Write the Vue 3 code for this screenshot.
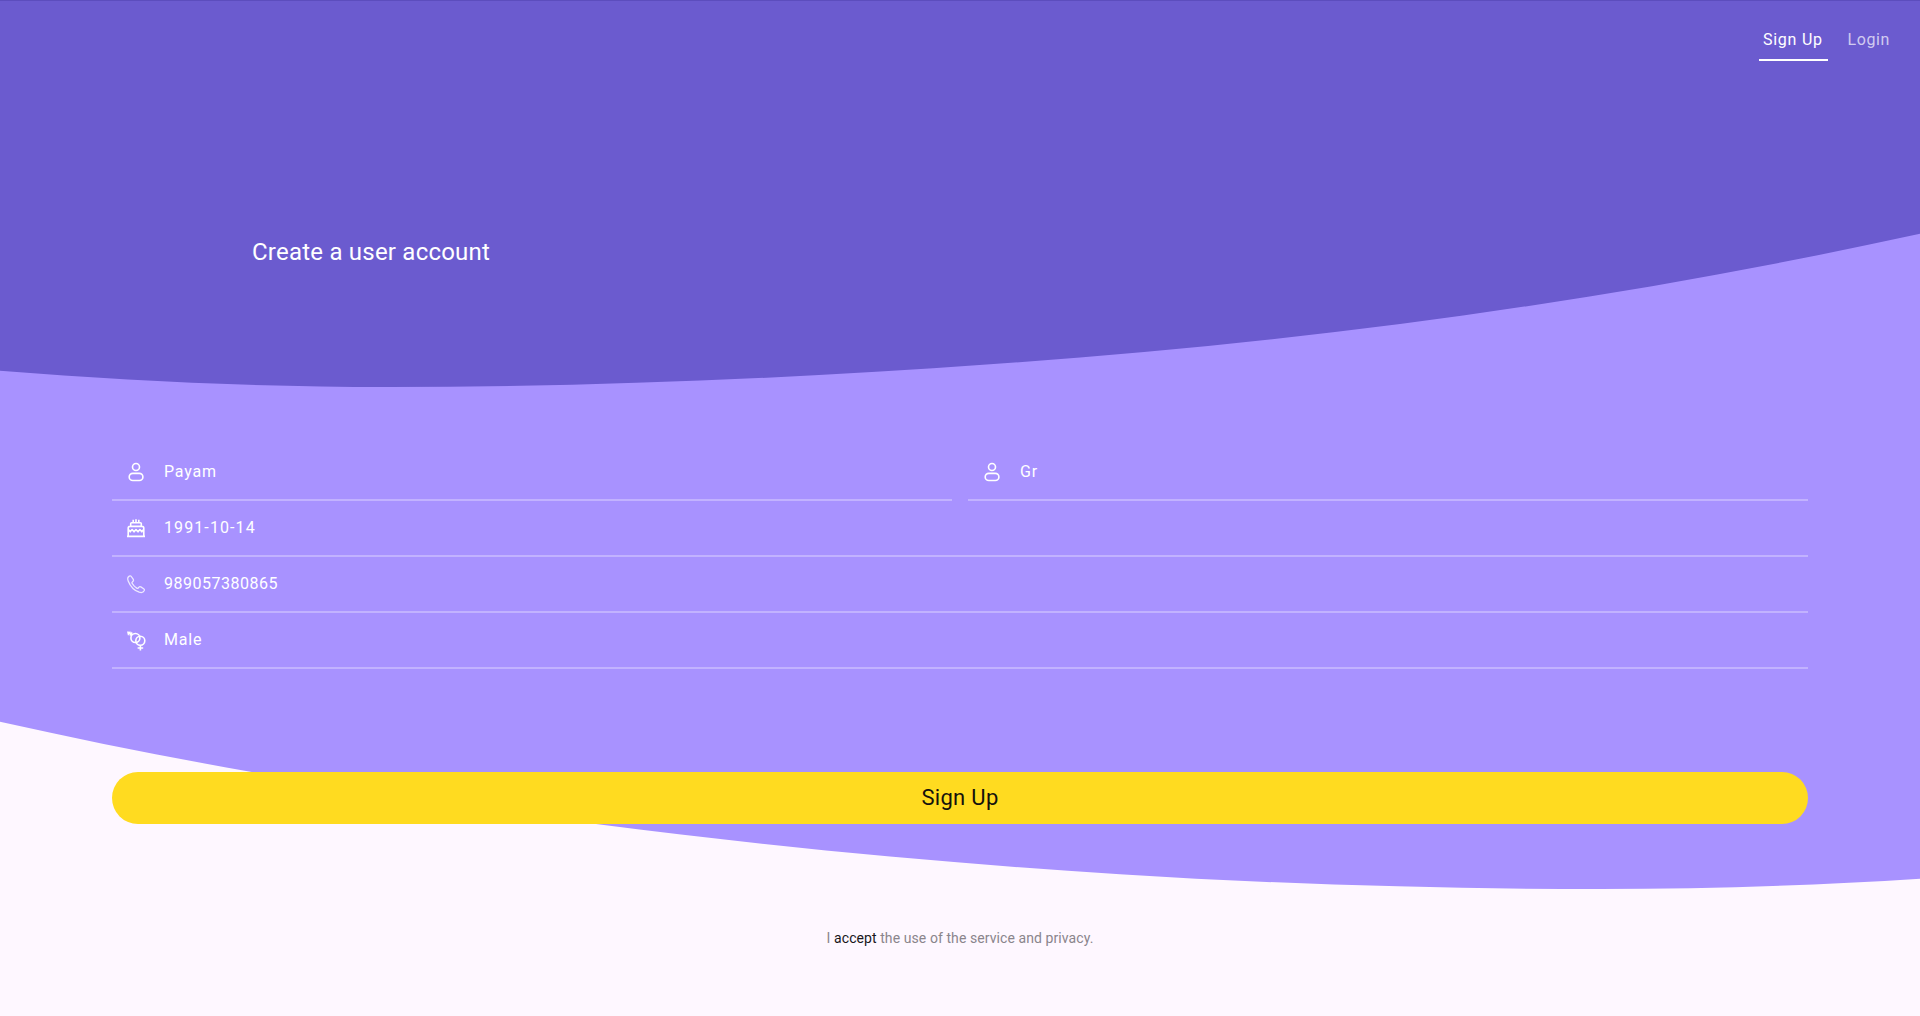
<script setup>
import { ref } from 'vue'

const tab = ref('Sign Up')
const tabs = ['Sign Up', 'Login']
const rows = [
  [
    { icon: 'person', value: 'Payam' },
    { icon: 'person', value: 'Gr' },
  ],
  [{ icon: 'cake', value: '1991-10-14' }],
  [{ icon: 'phone', value: '989057380865' }],
  [{ icon: 'gender', value: 'Male' }],
]
</script>

<template>
  <main class="page">
    <svg class="waves" viewBox="0 0 1920 1016" preserveAspectRatio="none" aria-hidden="true">
      <path
        fill="#a892ff"
        d="M0 0V721.7C199.3 766.5 398.7 798.6 598 824.2C772 846.8 946 863.2 1120 874.2C1280 884.3 1440 889 1600 889C1706.7 889 1813.3 885.6 1920 878.8V0Z"
      />
      <path
        fill="#6b5bcf"
        d="M0 0V370.8C129.3 381.3 258.7 387 388 387C588.7 387 789.3 378.7 990 364.3C1126.7 354.5 1263.3 341.7 1400 324C1573.3 301.5 1746.7 271.8 1920 233.8V0Z"
      />
    </svg>

    <header class="top">
      <nav class="tabs">
        <button
          v-for="name in tabs"
          :key="name"
          class="tab"
          :class="{ active: name === tab }"
          @click="tab = name"
        >{{ name }}</button>
      </nav>
      <h1 class="title">Create a user account</h1>
    </header>

    <form class="form" @submit.prevent>
      <div v-for="(row, i) in rows" :key="i" class="row">
        <div v-for="field in row" :key="field.value" class="field" :class="field.icon">
          <svg class="icon" viewBox="0 0 24 24" aria-hidden="true">
            <g v-if="field.icon === 'person'">
              <circle cx="12" cy="7" r="3.5" />
              <rect x="5.2" y="13.4" width="13.7" height="7.1" rx="3.55" />
            </g>
            <g v-else-if="field.icon === 'cake'">
              <path d="M3 20.4H21M4.2 20V12.2Q4.2 10.4 6 10.4H18Q19.8 10.4 19.8 12.2V20M6.7 10.2V7.6Q6.7 6.7 7.6 6.7H16.4Q17.3 6.7 17.3 7.6V10.2M9.2 6.5V3.8M12 6.5V3.2M14.8 6.5V3.8" />
              <path d="M4.4 13.6L6.2 15.8L8.1 13.6L10 15.8L12 13.6L14 15.8L15.9 13.6L17.8 15.8L19.6 13.6" />
            </g>
            <g v-else-if="field.icon === 'phone'">
              <path d="M5.3 4.1C3.6 5 3.3 6.6 4.2 8.9C6.3 14.2 10.2 18.4 15.2 20.2C17.6 21 19.4 20.4 20.3 18.5C20.6 17.8 20.3 17.2 19.7 16.8L16.8 14.9C16.1 14.5 15.4 14.6 14.9 15.2L14.2 16C13.8 16.4 13.3 16.4 12.8 16.1C10.7 14.9 9.2 13.3 8.1 11.3C7.8 10.8 7.9 10.3 8.3 10L9.1 9.2C9.6 8.7 9.7 8.1 9.3 7.4L7.3 4.5C6.8 3.8 6.1 3.7 5.3 4.1Z" />
            </g>
            <g v-else>
              <circle cx="11.4" cy="10" r="4.5" />
              <circle cx="16.3" cy="12.7" r="4.5" />
              <path d="M8.2 7L4.5 4.4M5.8 7.6L8.2 4.6M16.4 17.3V22.5M13.6 20H19.2" />
              <path class="solid" d="M3 3.6L7.4 3.7L4 7.8Z" />
            </g>
          </svg>
          <span class="value">{{ field.value }}</span>
        </div>
      </div>
      <button class="submit" type="submit">Sign Up</button>
      <p class="terms">I <b>accept</b> the use of the service and privacy.</p>
    </form>
  </main>
</template>

<style>
body {
  margin: 0;
}
</style>

<style scoped>
.page {
  position: relative;
  display: flex;
  flex-direction: column;
  height: 100vh;
  overflow: hidden;
  box-sizing: border-box;
  border-top: 1px solid #5c4dbd;
  background: #fef7ff;
  color: #fff;
  font-family: Roboto, sans-serif;
}
.waves {
  position: absolute;
  top: -1px;
  left: 0;
  width: 100%;
  height: 100vh;
  z-index: 0;
  clip-path: inset(1px 0 0 0);
}
.top,
.form {
  position: relative;
  z-index: 1;
}
.top {
  height: 442px;
}
.tabs {
  display: flex;
  justify-content: flex-end;
  gap: 16px;
  padding: 22px 26px 0 0;
}
button {
  border: 0;
  background: none;
  color: inherit;
  font: inherit;
}
.tab {
  box-sizing: border-box;
  height: 38px;
  padding: 0 4px 2px;
  border-bottom: 2px solid transparent;
  font-size: 16px;
  line-height: 34px;
  letter-spacing: 0.6px;
  color: rgba(255, 255, 255, 0.7);
}
.tab.active {
  border-color: #fff;
  padding-right: 4.8px;
  letter-spacing: 0.75px;
  color: #fff;
}
.title {
  margin: 174px 0 0 252px;
  font-size: 24px;
  line-height: 34px;
  font-weight: 400;
  letter-spacing: 0.22px;
}
.form {
  display: flex;
  flex-direction: column;
  padding: 2px 112px 0;
}
.row {
  display: flex;
  gap: 16px;
}
.field {
  flex: 1;
  display: flex;
  align-items: center;
  gap: 16px;
  box-sizing: border-box;
  height: 56px;
  padding: 0 12px;
  border-bottom: 2px solid #c2b2ff;
  letter-spacing: 0.8px;
}
.field.cake {
  letter-spacing: 1.1px;
}
.field.phone {
  letter-spacing: 0.5px;
}
.icon {
  width: 24px;
  height: 24px;
  fill: none;
  stroke: #fff;
  stroke-width: 1.6;
  stroke-linejoin: round;
}
.phone .icon {
  stroke-width: 1.3;
  stroke-opacity: 0.8;
}
.solid {
  fill: #fff;
  stroke: none;
}
.value {
  font-size: 16px;
  line-height: 24px;
}
.submit {
  height: 52px;
  margin-top: 103px;
  padding: 0;
  border-radius: 26px;
  background: #ffdb20;
  color: #14120c;
  font-size: 22px;
  line-height: 50px;
  letter-spacing: 0.3px;
}
.terms {
  margin: 104px 0 0;
  font-size: 14px;
  line-height: 20px;
  letter-spacing: 0.08px;
  text-align: center;
  color: #8a858c;
}
.terms b {
  font-weight: 400;
  color: #18161a;
}
</style>
